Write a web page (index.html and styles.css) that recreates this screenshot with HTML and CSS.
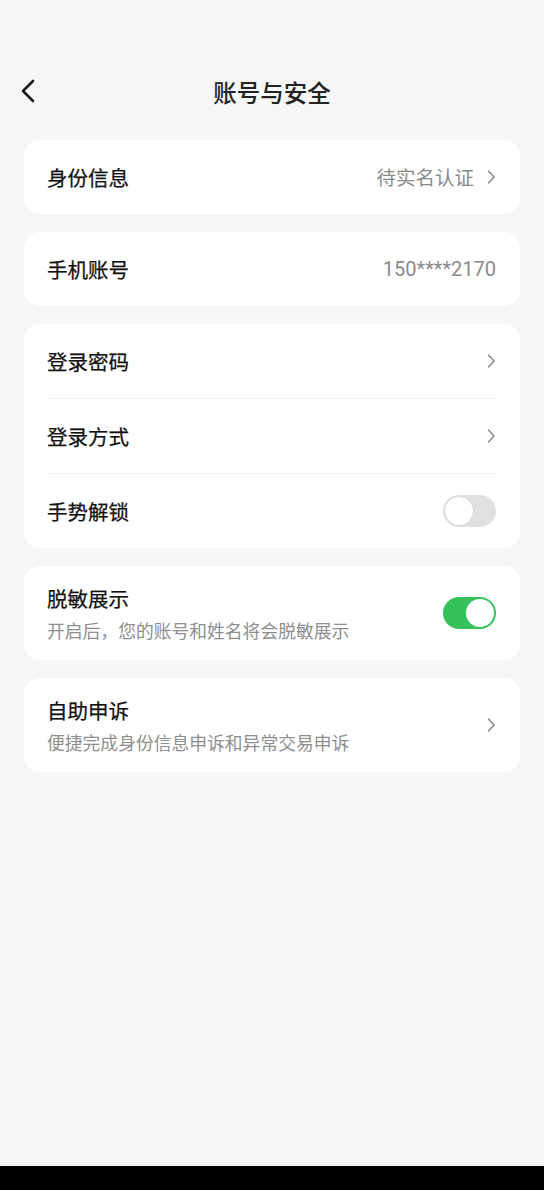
FILE: index.html
```html
<!DOCTYPE html>
<html lang="zh-CN">
<head>
<meta charset="utf-8">
<title>账号与安全</title>
<link rel="stylesheet" href="styles.css">
</head>
<body>
<div class="page">
  <div class="statusbar"></div>
  <header class="navbar">
    <span class="back">
      <svg width="16" height="24" viewBox="0 0 16 24"><path d="M13 2 L3 12 L13 22" fill="none" stroke="#1a1a1a" stroke-width="2.6" stroke-linecap="round" stroke-linejoin="round"/></svg>
    </span>
    <h1 class="title">账号与安全</h1>
  </header>
  <main class="content">
    <section class="card">
      <div class="row">
        <span class="label">身份信息</span>
        <span class="right"><span class="value">待实名认证</span><svg class="chev" width="10" height="16" viewBox="0 0 10 16"><path d="M2.5 2 L8 8 L2.5 14" fill="none" stroke="#8c8c8c" stroke-width="1.6" stroke-linecap="round" stroke-linejoin="round"/></svg></span>
      </div>
    </section>
    <section class="card">
      <div class="row">
        <span class="label">手机账号</span>
        <span class="right"><span class="value num">150****2170</span></span>
      </div>
    </section>
    <section class="card">
      <div class="row divided">
        <span class="label">登录密码</span>
        <span class="right"><svg class="chev" width="10" height="16" viewBox="0 0 10 16"><path d="M2.5 2 L8 8 L2.5 14" fill="none" stroke="#8c8c8c" stroke-width="1.6" stroke-linecap="round" stroke-linejoin="round"/></svg></span>
      </div>
      <div class="row divided">
        <span class="label">登录方式</span>
        <span class="right"><svg class="chev" width="10" height="16" viewBox="0 0 10 16"><path d="M2.5 2 L8 8 L2.5 14" fill="none" stroke="#8c8c8c" stroke-width="1.6" stroke-linecap="round" stroke-linejoin="round"/></svg></span>
      </div>
      <div class="row">
        <span class="label">手势解锁</span>
        <span class="switch"><span class="knob"></span></span>
      </div>
    </section>
    <section class="card">
      <div class="row tall">
        <div class="texts">
          <span class="label">脱敏展示</span>
          <span class="sub">开启后，您的账号和姓名将会脱敏展示</span>
        </div>
        <span class="switch on"><span class="knob"></span></span>
      </div>
    </section>
    <section class="card">
      <div class="row tall">
        <div class="texts">
          <span class="label">自助申诉</span>
          <span class="sub">便捷完成身份信息申诉和异常交易申诉</span>
        </div>
        <span class="right"><svg class="chev" width="10" height="16" viewBox="0 0 10 16"><path d="M2.5 2 L8 8 L2.5 14" fill="none" stroke="#8c8c8c" stroke-width="1.6" stroke-linecap="round" stroke-linejoin="round"/></svg></span>
      </div>
    </section>
  </main>
  <div class="homebar"></div>
</div>
</body>
</html>
```

FILE: styles.css
```css
html, body {
  margin: 0;
  padding: 0;
}
body {
  background: #f6f6f6;
  font-family: "Noto Sans CJK SC", "Noto Sans", sans-serif;
  color: #1c1c1c;
}
.page {
  height: 1190px;
  display: flex;
  flex-direction: column;
}
.statusbar {
  height: 60px;
}
.navbar {
  height: 64px;
  display: flex;
  align-items: center;
  justify-content: center;
  position: relative;
}
.back {
  position: absolute;
  left: 20px;
  top: 19px;
  display: flex;
}
.title {
  margin: 0;
  font-size: 23.5px;
  font-weight: 500;
  line-height: 1;
  color: #222222;
  padding-top: 2px;
}
.content {
  flex: 1;
  padding: 16px 24px 0;
  display: flex;
  flex-direction: column;
  gap: 18px;
}
.card {
  background: #ffffff;
  border-radius: 16px;
  padding: 0 24px 0 23px;
}
.row {
  height: 74px;
  display: flex;
  align-items: center;
  justify-content: space-between;
}
.row.divided {
  border-bottom: 1px solid #f1f1f1;
}
.row.tall {
  height: 94px;
}
.label {
  font-size: 20.5px;
  font-weight: 400;
  line-height: 1;
  color: #111111;
  -webkit-text-stroke: 0.25px #111111;
}
.texts {
  display: flex;
  flex-direction: column;
  gap: 13px;
  padding-top: 2px;
}
.sub {
  font-size: 17.8px;
  line-height: 1;
  color: #8e8e8e;
}
.right {
  display: flex;
  align-items: center;
  gap: 12px;
}
.value {
  font-size: 19.5px;
  color: #8a8a8a;
  line-height: 1;
}
.value.num {
  font-family: "Roboto", "Noto Sans", sans-serif;
  font-size: 20px;
  color: #8a8a8a;
}
.chev {
  display: block;
}
.switch {
  width: 53px;
  height: 32px;
  border-radius: 16px;
  background: #e0e0e0;
  display: flex;
  align-items: center;
  padding: 0 2px;
  box-sizing: border-box;
}
.switch .knob {
  width: 28px;
  height: 28px;
  border-radius: 50%;
  background: #ffffff;
  box-shadow: 0 0 1px rgba(0,0,0,0.15);
}
.switch.on {
  background: #35c25b;
  justify-content: flex-end;
}
.switch.on .knob {
  box-shadow: none;
}
.homebar {
  height: 24px;
  background: #000000;
}
```
